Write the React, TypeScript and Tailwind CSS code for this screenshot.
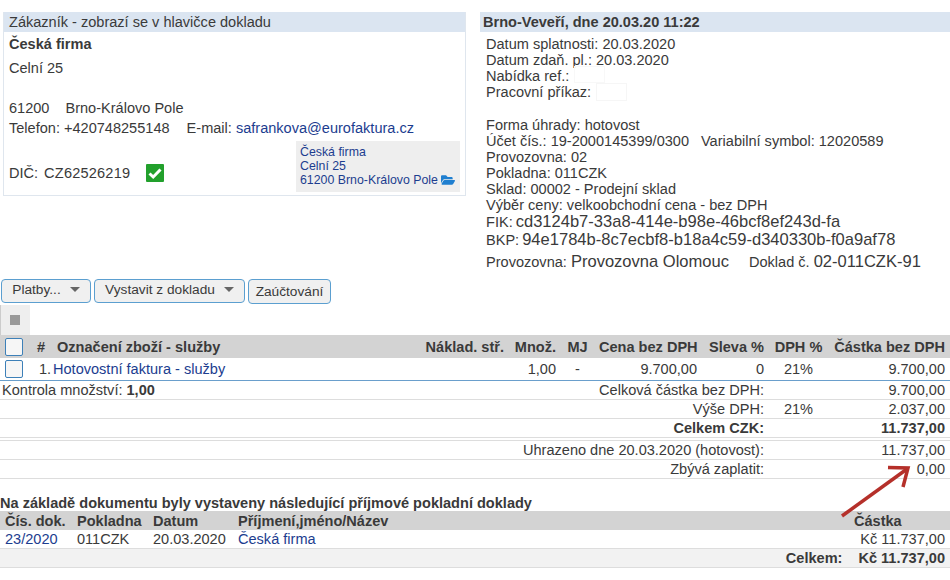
import React from "react";
import { FaFolderOpen } from "react-icons/fa";

const rowGrid = "grid grid-cols-[52px_452px_52px_43px_98px_67px_69px_112px] items-center whitespace-nowrap";
const summaryGrid = "grid grid-cols-[764px_69px_112px] items-center h-[19px] border-b border-[#dddddd]";
const docGrid = "grid grid-cols-[72px_76px_85px_1fr_120px] items-center px-[5px]";
const actionButton = "rounded-[4px] border border-[#5b9fd0] bg-[#f0f0f0] text-[13.7px] leading-[14px]";

function Caret() {
  return <span className="inline-block ml-[9px] align-[2px] w-0 h-0 border-x-[5px] border-x-transparent border-t-[5px] border-t-[#666666]" />;
}

function Checkbox() {
  return <span className="block w-[18px] h-[18px] rounded-[2px] border border-[#3d80b8] bg-[#f6f6f6]" />;
}

function SummaryRow({ label, rate, value, bold }: { label: string; rate?: string; value: string; bold?: boolean }) {
  return (
    <div className={summaryGrid + (bold ? " font-bold" : "")}>
      <div className="text-right">{label}</div>
      <div className="text-center">{rate}</div>
      <div className="text-right">{value}</div>
    </div>
  );
}

export default function App() {
  return (
    <div className="relative w-[950px] h-[580px] overflow-hidden bg-white text-[14.55px] leading-[16px] text-[#3a3a3a] font-['Liberation_Sans',Arial,sans-serif]">
      <div className="flex h-[279px] pt-[12px]">
        {/* customer box */}
        <div className="ml-[3px] w-[463px] h-[184px] border border-[#dfe6ee] border-t-0 self-start">
          <div className="h-[20px] leading-[20px] bg-[#dbe5f1] pl-[5px]">Zákazník - zobrazí se v hlavičce dokladu</div>
          <div className="pl-[5px] pt-[4px] font-bold h-[24px]">Česká firma</div>
          <div className="pl-[5px] h-[40px] pt-[4px]">Celní 25</div>
          <div className="pl-[5px] h-[20px] pt-[4px]">61200<span className="ml-[16px]">Brno-Královo Pole</span></div>
          <div className="pl-[5px] h-[20px] pt-[4px] whitespace-nowrap">
            Telefon: +420748255148<span className="ml-[17px]">E-mail: </span><span className="text-[#1c3d8f]">safrankova@eurofaktura.cz</span>
          </div>
          <div className="flex items-center justify-between pl-[5px] pr-[5px] h-[56px] pt-[4px]">
            <div className="flex items-center mt-[13px]">
              <span>DIČ:</span>
              <span className="ml-[6px] tracking-[0.2px]">CZ62526219</span>
              <svg className="ml-[16px]" width="18" height="18" viewBox="0 0 18 18">
                <rect width="18" height="18" rx="1" fill="#22a02c" />
                <path d="M3.5 9.5 7.2 13 14.5 5.5" fill="none" stroke="#ffffff" strokeWidth="3" />
              </svg>
            </div>
            <div className="w-[164px] h-[51px] bg-[#eeeeee] pl-[4px] pt-[4px] text-[12.35px] leading-[14px] text-[#1c3d8f]">
              <div>Česká firma</div>
              <div>Celní 25</div>
              <div className="flex items-center whitespace-nowrap">
                61200 Brno-Královo Pole
                <FaFolderOpen className="ml-[3px] text-[#1f7fd0] text-[14px]" />
              </div>
            </div>
          </div>
        </div>
        {/* document info */}
        <div className="ml-[14px] flex-1">
          <div className="h-[20px] leading-[20px] bg-[#dbe5f1] pl-[3px] font-bold">Brno-Veveří, dne 20.03.20 11:22</div>
          <div className="pl-[6px] pt-[4px]">
            <div>Datum splatnosti: 20.03.2020</div>
            <div>Datum zdaň. pl.: 20.03.2020</div>
            <div className="flex">
              Nabídka ref.:
              <span className="ml-[5px] -mt-[2px] w-[31px] h-[17px] border border-[#f8f8f8]" />
            </div>
            <div className="flex">
              Pracovní příkaz:
              <span className="ml-[5px] -mt-[1px] w-[31px] h-[18px] border border-[#f6f6f6]" />
            </div>
            <div className="mt-[16px]">Forma úhrady: hotovost</div>
            <div className="whitespace-nowrap">Účet čís.: 19-2000145399/0300<span className="ml-[12px]">Variabilní symbol: 12020589</span></div>
            <div>Provozovna: 02</div>
            <div>Pokladna: 011CZK</div>
            <div>Sklad: 00002 - Prodejní sklad</div>
            <div>Výběr ceny: velkoobchodní cena - bez DPH</div>
            <div className="h-[18px] pt-[1px] whitespace-nowrap">FIK:<span className="ml-[3px] text-[16.55px]">cd3124b7-33a8-414e-b98e-46bcf8ef243d-fa</span></div>
            <div className="h-[20px] pt-[1px] whitespace-nowrap">BKP:<span className="ml-[3px] text-[16.55px]">94e1784b-8c7ecbf8-b18a4c59-d340330b-f0a9af78</span></div>
            <div className="pt-[3px] whitespace-nowrap">
              Provozovna: <span className="text-[16.55px]">Provozovna Olomouc</span>
              <span className="ml-[20px]">Doklad č. </span><span className="text-[16.55px]">02-011CZK-91</span>
            </div>
          </div>
        </div>
      </div>

      {/* action buttons */}
      <div className="flex gap-[3px] h-[26px] pl-[1px]">
        <button className={actionButton + " w-[90px] h-[24px] pb-[2px]"}>Platby...<Caret /></button>
        <button className={actionButton + " w-[151px] h-[24px] pb-[2px]"}>Vystavit z dokladu<Caret /></button>
        <button className={actionButton + " w-[83px] h-[25px]"}>Zaúčtování</button>
      </div>
      <div className="w-[30px] h-[30px] bg-[#eeeeee] border-l border-[#cccccc] pr-[1px] flex items-center justify-center">
        <span className="w-[10px] h-[10px] bg-[#999999]" />
      </div>

      {/* items table */}
      <div className={rowGrid + " h-[23px] bg-[#d3d3d3] font-bold"}>
        <div className="flex items-center pl-[5px]">
          <Checkbox />
          <span className="ml-[14px]">#</span>
        </div>
        <div className="pl-[5px] flex justify-between">
          <span>Označení zboží - služby</span>
          <span>Náklad. stř.</span>
        </div>
        <div className="text-right">Množ.</div>
        <div className="text-center">MJ</div>
        <div className="text-right">Cena bez DPH</div>
        <div className="text-right">Sleva %</div>
        <div className="text-center">DPH %</div>
        <div className="text-right">Částka bez DPH</div>
      </div>
      <div className={rowGrid + " h-[23px] border-b border-[#6a9fcc]"}>
        <div className="flex items-center pl-[5px]">
          <Checkbox />
          <span className="ml-[16px]">1.</span>
        </div>
        <div className="text-[#1c3d8f] pl-[1px]">Hotovostní faktura - služby</div>
        <div className="text-right">1,00</div>
        <div className="text-center">-</div>
        <div className="text-right">9.700,00</div>
        <div className="text-right">0</div>
        <div className="text-center">21%</div>
        <div className="text-right">9.700,00</div>
      </div>

      {/* totals */}
      <div className="relative">
        <div className="absolute left-[2px] top-[1px] bg-white">Kontrola množství: <b>1,00</b></div>
        <SummaryRow label="Celková částka bez DPH:" value="9.700,00" />
        <SummaryRow label="Výše DPH:" rate="21%" value="2.037,00" />
        <SummaryRow label="Celkem CZK:" value="11.737,00" bold />
      </div>
      <div className="mt-[2px] border-t border-[#dddddd]">
        <SummaryRow label="Uhrazeno dne 20.03.2020 (hotovost):" value="11.737,00" />
        <SummaryRow label="Zbývá zaplatit:" value="0,00" />
      </div>

      {/* cash documents */}
      <div className="mt-[16px] font-bold">Na základě dokumentu byly vystaveny následující příjmové pokladní doklady</div>
      <div className={docGrid + " h-[19px] bg-[#d3d3d3] font-bold"}>
        <div>Čís. dok.</div>
        <div>Pokladna</div>
        <div>Datum</div>
        <div>Příjmení,jméno/Název</div>
        <div className="pl-[29px]">Částka</div>
      </div>
      <div className={docGrid + " h-[19px] border-b border-[#dddddd]"}>
        <div className="text-[#1c3d8f]">23/2020</div>
        <div>011CZK</div>
        <div>20.03.2020</div>
        <div className="text-[#1c3d8f]">Česká firma</div>
        <div className="text-right">Kč 11.737,00</div>
      </div>
      <div className="flex justify-end h-[19px] items-center bg-[#f2f2f2] border-b border-[#dddddd] pr-[5px] font-bold">
        <span>Celkem:</span>
        <span className="ml-[16px]">Kč 11.737,00</span>
      </div>

      {/* red annotation arrow */}
      <svg className="absolute left-[835px] top-[460px]" width="80" height="60" viewBox="0 0 80 60">
        <path d="M7 56 72 9" stroke="#b5302a" strokeWidth="3.5" fill="none" />
        <path d="M53 7.5 73 8 68 27" stroke="#b5302a" strokeWidth="3.5" fill="none" />
      </svg>
    </div>
  );
}
